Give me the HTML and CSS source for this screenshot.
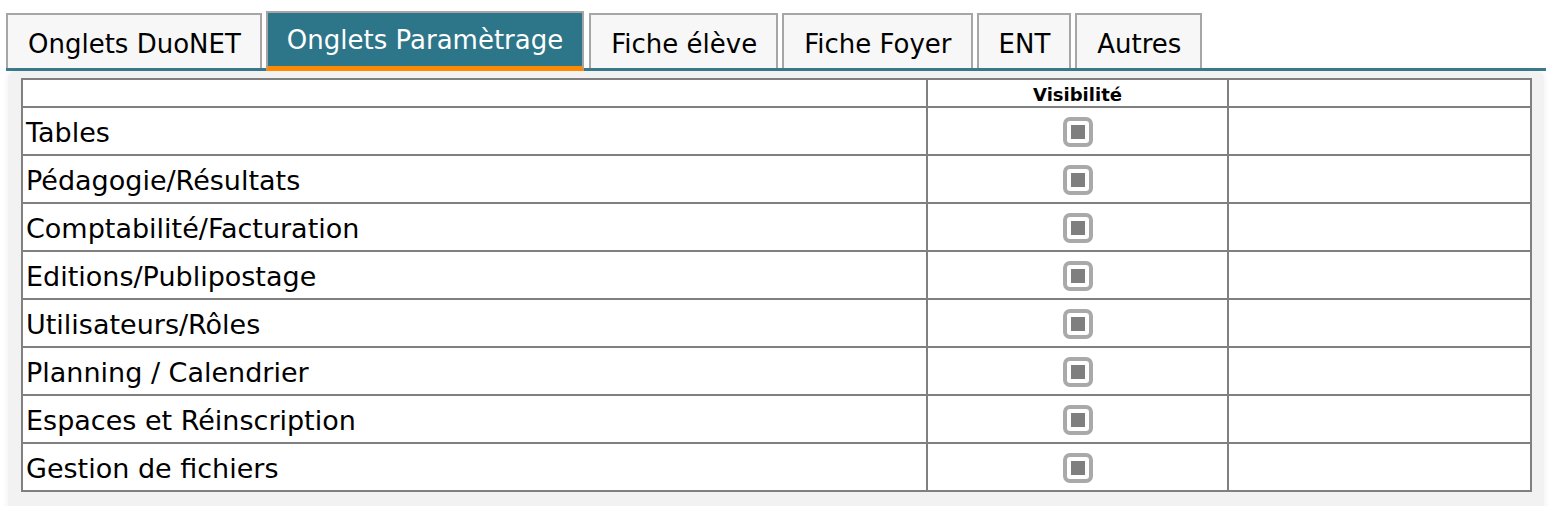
FILE: index.html
```html
<!DOCTYPE html>
<html lang="fr">
<head>
<meta charset="utf-8">
<title>Onglets Paramètrage</title>
<link rel="stylesheet" href="styles.css">
</head>
<body>
<div class="tabs">
  <div class="tab">Onglets DuoNET</div>
  <div class="tab active">Onglets Paramètrage</div>
  <div class="tab">Fiche élève</div>
  <div class="tab">Fiche Foyer</div>
  <div class="tab">ENT</div>
  <div class="tab">Autres</div>
</div>
<div class="panel">
  <table class="grid">
    <colgroup>
      <col class="c1"><col class="c2"><col class="c3">
    </colgroup>
    <thead>
      <tr><th></th><th>Visibilité</th><th></th></tr>
    </thead>
    <tbody>
      <tr><td>Tables</td><td class="chk"><span class="box"><span class="mark"></span></span></td><td></td></tr>
      <tr><td>Pédagogie/Résultats</td><td class="chk"><span class="box"><span class="mark"></span></span></td><td></td></tr>
      <tr><td>Comptabilité/Facturation</td><td class="chk"><span class="box"><span class="mark"></span></span></td><td></td></tr>
      <tr><td>Editions/Publipostage</td><td class="chk"><span class="box"><span class="mark"></span></span></td><td></td></tr>
      <tr><td>Utilisateurs/Rôles</td><td class="chk"><span class="box"><span class="mark"></span></span></td><td></td></tr>
      <tr><td>Planning / Calendrier</td><td class="chk"><span class="box"><span class="mark"></span></span></td><td></td></tr>
      <tr><td>Espaces et Réinscription</td><td class="chk"><span class="box"><span class="mark"></span></span></td><td></td></tr>
      <tr><td>Gestion de fichiers</td><td class="chk"><span class="box"><span class="mark"></span></span></td><td></td></tr>
    </tbody>
  </table>
</div>
</body>
</html>
```

FILE: styles.css
```css
html, body {
  margin: 0;
  padding: 0;
  background: #ffffff;
  font-family: "DejaVu Sans", Verdana, sans-serif;
  color: #000;
  overflow: hidden;
}

.tabs {
  display: flex;
  align-items: flex-end;
  gap: 4px;
  margin: 11px 7px 0 6px;
  border-bottom: 3px solid #3a7b8d;
  height: 57px;
}

.tab {
  box-sizing: border-box;
  height: 55px;
  padding: 14px 19px 9px 20px;
  border: 2px solid #a6a6a6;
  border-bottom: none;
  background: #f7f7f7;
  font-size: 26px;
  line-height: 30px;
  white-space: nowrap;
}

.tab.active {
  height: 60px;
  margin-bottom: -3px;
  padding: 12px 19px 11px 19px;
  background: #2d7589;
  color: #ffffff;
  border-bottom: 5px solid #ff8a00;
}

.tab.active + .tab {
  margin-left: 1px;
}

.panel {
  margin: 0 9px 0 8px;
  padding: 7px 13px 20px 14px;
  background: #f2f2f2;
  border-radius: 8px 8px 0 0;
  box-shadow: 0 0 7px rgba(0, 0, 0, 0.07);
  height: 520px;
}

.grid {
  border-collapse: collapse;
  table-layout: fixed;
  width: 1509px;
  background: #ffffff;
  margin-left: -1px;
}

.grid col.c1 { width: 905px; }
.grid col.c2 { width: 301px; }
.grid col.c3 { width: 303px; }

.grid th,
.grid td {
  border: 2px solid #808080;
  padding: 0 3px;
}

.grid th {
  height: 25px;
  font-size: 18px;
  line-height: 21px;
  font-weight: bold;
  text-align: center;
  vertical-align: bottom;
  padding-bottom: 1px;
}

.grid td {
  height: 42px;
  padding-top: 4px;
  padding-bottom: 0;
  font-size: 27px;
  line-height: 30px;
  vertical-align: middle;
  white-space: nowrap;
}

.grid td.chk {
  text-align: center;
  padding: 0;
}

.box {
  display: inline-flex;
  align-items: center;
  justify-content: center;
  box-sizing: border-box;
  width: 30px;
  height: 30px;
  border: 4px solid #a9a9a9;
  border-radius: 7px;
  background: #ffffff;
  vertical-align: middle;
}

.mark {
  display: block;
  width: 14px;
  height: 14px;
  background: #7f7f7f;
}
```
